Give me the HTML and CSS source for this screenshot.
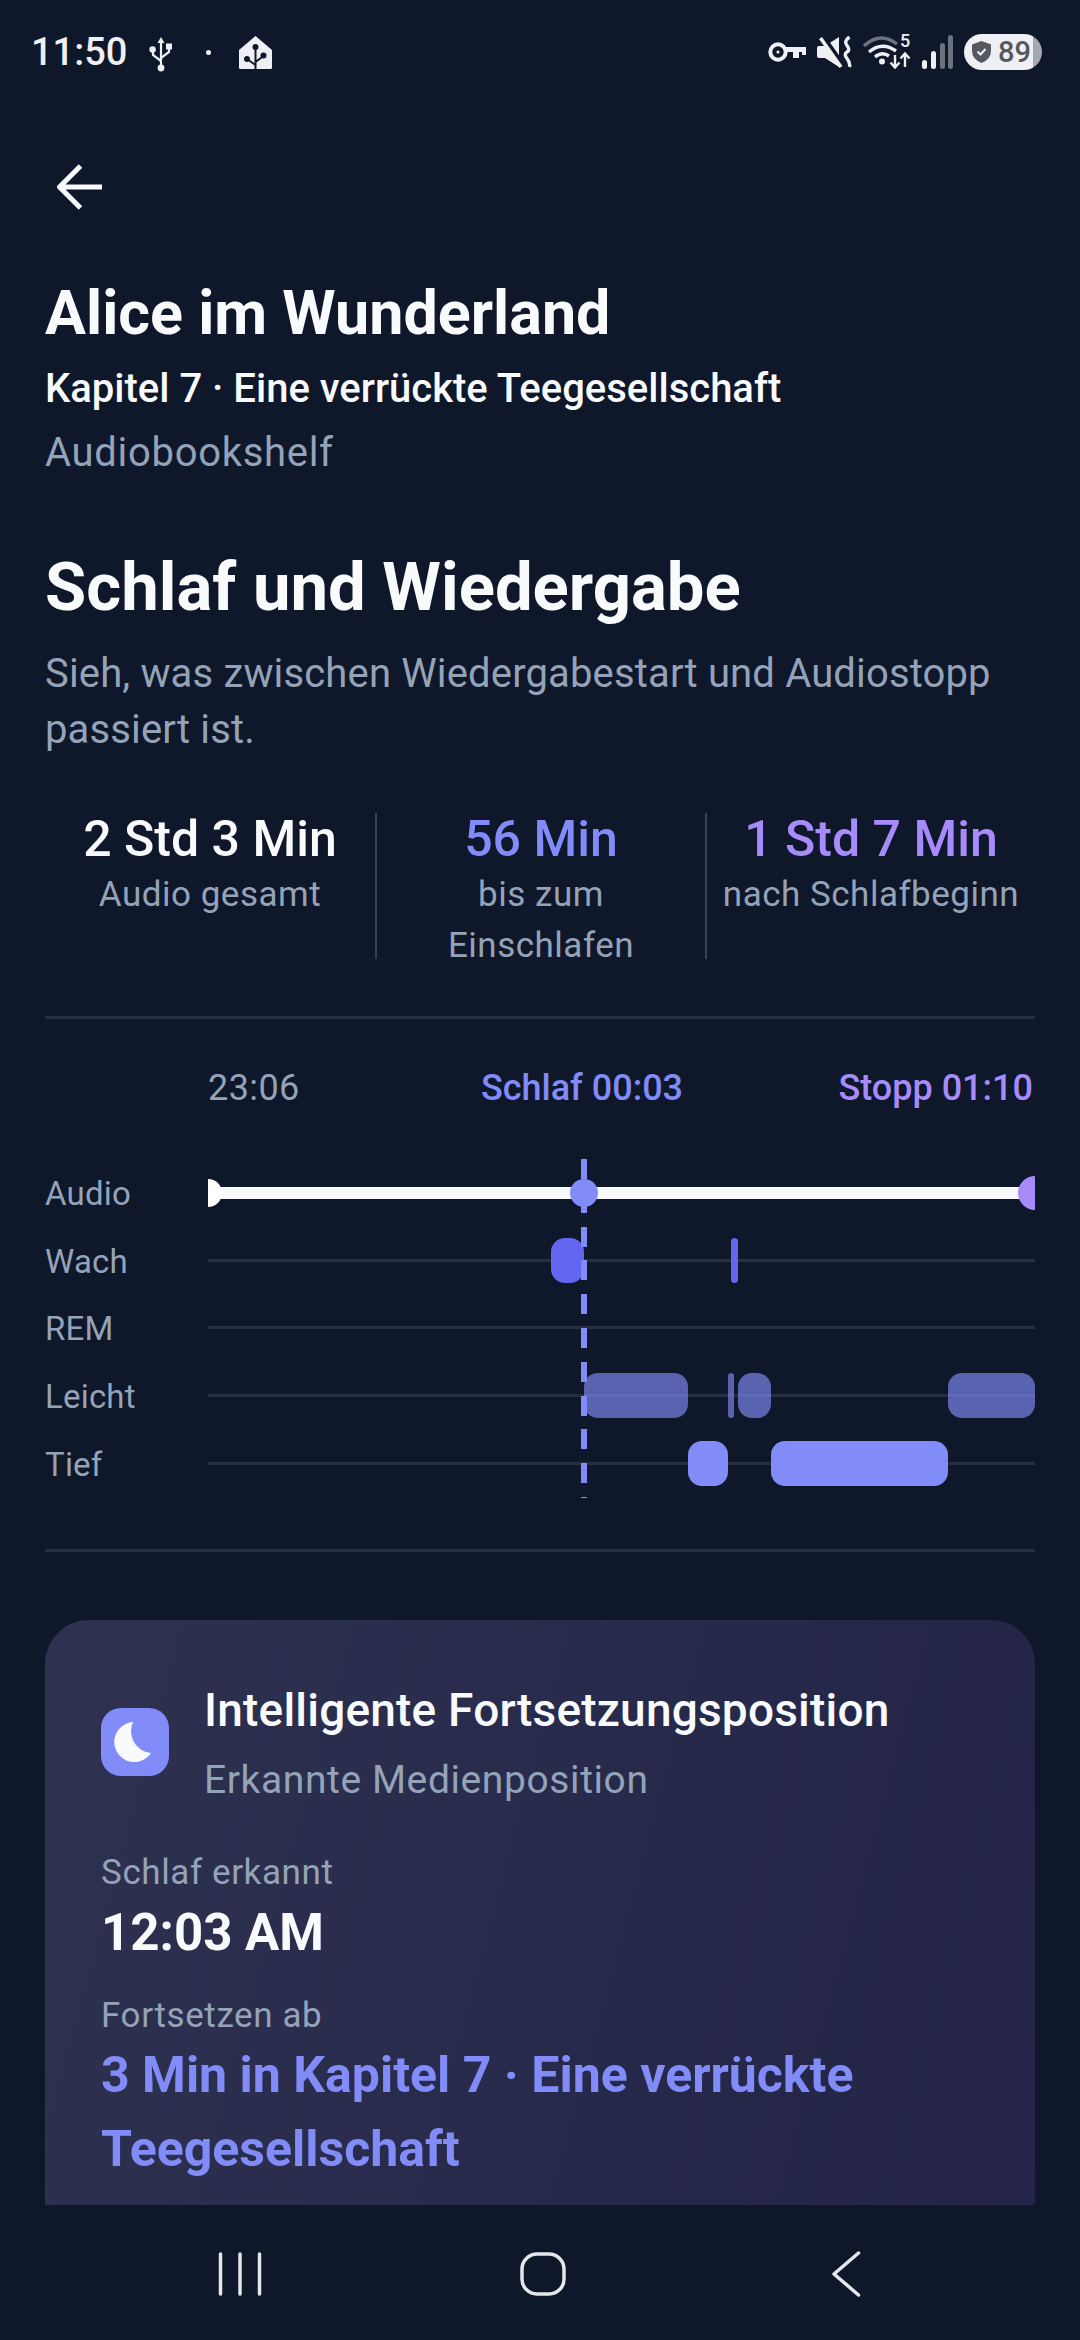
FILE: index.html
```html
<!DOCTYPE html>
<html lang="de">
<head>
    <meta charset="UTF-8">
    <meta name="viewport" content="width=device-width, initial-scale=1.0">
    <title>Schlaf und Wiedergabe</title>
    <link rel="stylesheet" href="styles.css">
</head>
<body>
    <div class="phone">
        <div class="status-bar">
            <div class="status-left">
                <span class="clock">11:50</span>
                <svg class="icon-usb" width="24" height="35" viewBox="0 0 24 35">
                    <path d="M12 30V3M12 24L4 18V14M12 21L20 15V11" fill="none" stroke="#eef0f3" stroke-width="2.2"/>
                    <path d="M12 0L15.5 6H8.5Z" fill="#eef0f3"/>
                    <circle cx="12" cy="31" r="3.4" fill="#eef0f3"/>
                    <circle cx="3.6" cy="12.5" r="3.2" fill="#eef0f3"/>
                    <rect x="17" y="6.5" width="6" height="6" fill="#eef0f3"/>
                </svg>
                <span class="status-dot"></span>
                <svg class="icon-home" width="33" height="33" viewBox="0 0 33 33">
                    <path d="M16.500 0L33 14V31.500Q33 33 31.500 33H1.500Q0 33 0 31.500V14Z" fill="#eef0f3"/>
                    <path d="M16.500 33V9M16.500 26L24.500 20M16.500 29L8 23" fill="none" stroke="#0f172a" stroke-width="2"/>
                    <circle cx="16.500" cy="11" r="3" fill="#0f172a"/>
                    <circle cx="24.500" cy="19.500" r="3" fill="#0f172a"/>
                    <circle cx="8" cy="23" r="3" fill="#0f172a"/>
                </svg>
            </div>
            <div class="status-right">
                <svg class="icon-key" width="38" height="20" viewBox="0 0 38 20">
                    <circle cx="10" cy="10" r="7.700" fill="none" stroke="#eef0f3" stroke-width="4"/>
                    <circle cx="10" cy="10" r="1.600" fill="#eef0f3"/>
                    <path d="M17 5H38V13H34V10H31V16H25V10H17Z" fill="#eef0f3"/>
                </svg>
                <svg class="icon-mute" width="35" height="32" viewBox="0 0 35 32">
                    <path d="M2 10H8L22 1V31L8 22H2Q0 22 0 20V12Q0 10 2 10Z" fill="#eef0f3"/>
                    <path d="M4 -1L28 33" stroke="#0f172a" stroke-width="6"/>
                    <path d="M3.500 2L24 31" stroke="#eef0f3" stroke-width="3.600"/>
                    <path d="M32.500 1Q26.500 5 30 9.500T30 16T30 22.500T32.500 31" fill="none" stroke="#eef0f3" stroke-width="3.400"/>
                </svg>
                <div class="wifi">
                    <svg width="48" height="34" viewBox="0 0 48 34">
                        <path d="M1 11Q17 -4 34 9" fill="none" stroke="#6b7280" stroke-width="3.400"/>
                        <path d="M6 17Q19 6 33 16" fill="none" stroke="#eef0f3" stroke-width="3.400"/>
                        <path d="M12 22Q19 16 26 21" fill="none" stroke="#eef0f3" stroke-width="3.400"/>
                        <circle cx="19" cy="26.500" r="3" fill="#eef0f3"/>
                        <path d="M32 20V32M27.500 27.500L32 32.500L36.500 27.500M42 32V19M37.500 23.500L42 18.500L46.500 23.500" fill="none" stroke="#eef0f3" stroke-width="2.400"/>
                    </svg>
                    <span class="wifi-num">5</span>
                </div>
                <svg class="icon-signal" width="31" height="34" viewBox="0 0 31 34">
                    <rect x="0" y="25" width="5" height="9" rx="2.500" fill="#eef0f3"/>
                    <rect x="9" y="16" width="5" height="18" rx="2.500" fill="#eef0f3"/>
                    <rect x="18" y="8" width="5" height="26" rx="2.500" fill="#6b7280"/>
                    <rect x="26" y="0" width="5" height="34" rx="2.500" fill="#6b7280"/>
                </svg>
                <div class="battery">
                    <svg width="19" height="22" viewBox="0 0 19 22">
                        <path d="M9.500 0L19 3.500V10Q19 18 9.500 22Q0 18 0 10V3.500Z" fill="#55585f"/>
                        <path d="M5.500 10.500L8.500 13.500L13.500 8" fill="none" stroke="#eef0f3" stroke-width="2"/>
                    </svg>
                    <span>89</span>
                </div>
            </div>
        </div>

        <div class="content">
            <div class="back">
                <svg width="46" height="46" viewBox="0 0 46 46">
                    <path d="M45 23H3M23.500 2L2.500 23L23.500 44" fill="none" stroke="#f8fafc" stroke-width="5"/>
                </svg>
            </div>

            <h1 class="book-title">Alice im Wunderland</h1>
            <div class="chapter">Kapitel 7 · Eine verrückte Teegesellschaft</div>
            <div class="source">Audiobookshelf</div>

            <h2 class="section-title">Schlaf und Wiedergabe</h2>
            <p class="section-text">Sieh, was zwischen Wiedergabestart und Audiostopp passiert ist.</p>

            <div class="stats">
                <div class="stat">
                    <div class="stat-value">2 Std 3 Min</div>
                    <div class="stat-label">Audio gesamt</div>
                </div>
                <div class="stat">
                    <div class="stat-value indigo">56 Min</div>
                    <div class="stat-label">bis zum Einschlafen</div>
                </div>
                <div class="stat">
                    <div class="stat-value purple">1 Std 7 Min</div>
                    <div class="stat-label">nach Schlafbeginn</div>
                </div>
            </div>

            <div class="timeline">
                <div class="times">
                    <span class="time-start">23:06</span>
                    <span class="time-sleep">Schlaf 00:03</span>
                    <span class="time-stop">Stopp 01:10</span>
                </div>
                <div class="chart">
                    <div class="row">
                        <span class="row-label">Audio</span>
                        <div class="track">
                            <div class="audio-line"></div>
                            <div class="cap cap-start"></div>
                            <div class="cap cap-stop"></div>
                        </div>
                    </div>
                    <div class="row">
                        <span class="row-label">Wach</span>
                        <div class="track">
                            <div class="grid-line"></div>
                            <div class="seg seg-wake" style="left: 41.44%; width: 4.03%"></div>
                            <div class="seg seg-wake seg-thin" style="left: 63.23%; width: 0.85%"></div>
                        </div>
                    </div>
                    <div class="row">
                        <span class="row-label">REM</span>
                        <div class="track">
                            <div class="grid-line"></div>
                        </div>
                    </div>
                    <div class="row">
                        <span class="row-label">Leicht</span>
                        <div class="track">
                            <div class="grid-line"></div>
                            <div class="seg seg-light" style="left: 45.47%; width: 12.54%"></div>
                            <div class="seg seg-light seg-thin" style="left: 62.88%; width: 0.69%"></div>
                            <div class="seg seg-light" style="left: 64.05%; width: 4.06%"></div>
                            <div class="seg seg-light seg-end" style="left: 89.48%; width: 10.52%"></div>
                        </div>
                    </div>
                    <div class="row">
                        <span class="row-label">Tief</span>
                        <div class="track">
                            <div class="grid-line"></div>
                            <div class="seg seg-deep" style="left: 58.01%; width: 4.87%"></div>
                            <div class="seg seg-deep" style="left: 68.12%; width: 21.36%"></div>
                        </div>
                    </div>
                    <div class="sleep-dash"></div>
                    <div class="sleep-dot"></div>
                </div>
            </div>

            <div class="card">
                <div class="card-head">
                    <div class="card-icon">
                        <svg width="68" height="68" viewBox="0 0 68 68">
                            <path d="M32 14A20 20 0 1 0 50 45A22 22 0 0 1 32 14Z" fill="#f8fafc"/>
                        </svg>
                    </div>
                    <div>
                        <div class="card-title">Intelligente Fortsetzungsposition</div>
                        <div class="card-sub">Erkannte Medienposition</div>
                    </div>
                </div>
                <div class="field-label first">Schlaf erkannt</div>
                <div class="field-value">12:03 AM</div>
                <div class="field-label second">Fortsetzen ab</div>
                <div class="resume">3 Min in Kapitel 7 · Eine verrückte Teegesellschaft</div>
            </div>
        </div>

        <div class="nav-bar">
            <div class="nav-item">
                <svg width="44" height="44" viewBox="0 0 44 44">
                    <path d="M2.500 2V42M22 2V42M41.500 2V42" fill="none" stroke="#e5e7eb" stroke-width="3.500" stroke-linecap="round"/>
                </svg>
            </div>
            <div class="nav-item">
                <svg width="46" height="44" viewBox="0 0 46 44">
                    <rect x="2" y="2" width="42" height="40" rx="15" fill="none" stroke="#e5e7eb" stroke-width="3.500"/>
                </svg>
            </div>
            <div class="nav-item">
                <svg width="30" height="46" viewBox="0 0 30 46">
                    <path d="M27.500 2L3 23L27.500 44" fill="none" stroke="#e5e7eb" stroke-width="3.500" stroke-linecap="round" stroke-linejoin="round"/>
                </svg>
            </div>
        </div>
    </div>
</body>
</html>
```

FILE: styles.css
```css
* {
    box-sizing: border-box;
}

body {
    margin: 0;
    background-color: #0f172a;
    font-family: Roboto, "Noto Sans", sans-serif;
    color: #f8fafc;
}

.phone {
    width: 1080px;
    height: 2340px;
    display: flex;
    flex-direction: column;
    overflow: hidden;
}

/* status bar */
.status-bar {
    height: 104px;
    flex-shrink: 0;
    padding: 0 38px 0 31px;
    display: flex;
    align-items: center;
    justify-content: space-between;
}

.status-left {
    display: flex;
    align-items: center;
}

.clock {
    font-size: 38px;
    font-weight: 500;
    color: #eef0f3;
    width: 118px;
}

.icon-usb {
    margin-top: 4px;
}

.status-dot {
    width: 5px;
    height: 5px;
    border-radius: 50%;
    background-color: #eef0f3;
    margin: 0 28px 0 33px;
}

.status-right {
    display: flex;
    align-items: center;
    gap: 11px;
}

.wifi {
    position: relative;
    height: 34px;
}

.wifi-num {
    position: absolute;
    left: 37px;
    top: -4px;
    font-size: 18px;
    line-height: 20px;
    font-weight: 500;
    color: #eef0f3;
}

.battery {
    width: 78px;
    height: 36px;
    border-radius: 18px;
    background: linear-gradient(to right, #eef0f3 88%, #a5a7b0 88%);
    display: flex;
    align-items: center;
    padding-left: 8px;
    gap: 7px;
    font-size: 29px;
    font-weight: 500;
    color: #55585f;
}

/* main column */
.content {
    flex: 1;
    min-height: 0;
    overflow: hidden;
    padding: 0 45px;
}

.back {
    margin-top: 60px;
    height: 62px;
    padding-left: 12px;
}

.book-title {
    margin: 49px 0 0;
    font-size: 61px;
    font-weight: 700;
    line-height: 76px;
}

.chapter {
    margin-top: 12px;
    font-size: 40px;
    font-weight: 500;
    line-height: 52px;
}

.source {
    margin-top: 11.500px;
    font-size: 40px;
    line-height: 52px;
    color: #94a3b8;
    letter-spacing: 0.7px;
}

.section-title {
    margin: 68.500px 0 0;
    font-size: 67px;
    font-weight: 700;
    line-height: 80px;
}

.section-text {
    margin: 19px 0 0;
    font-size: 40px;
    line-height: 56px;
    color: #94a3b8;
    letter-spacing: 0.15px;
}

/* stats */
.stats {
    margin-top: 55px;
    height: 146px;
    display: grid;
    grid-template-columns: 1fr 1fr 1fr;
    grid-template-rows: 146px;
    text-align: center;
}

.stat {
    padding: 1px 10px 0;
}

.stat + .stat {
    border-left: 2px solid rgba(255, 255, 255, 0.18);
}

.stat-value {
    font-size: 50px;
    font-weight: 500;
    line-height: 50px;
}

.stat-label {
    margin-top: 5px;
    font-size: 35px;
    line-height: 51px;
    color: #94a3b8;
    letter-spacing: 0.5px;
}

.indigo {
    color: #818cf8;
}

.purple {
    color: #a78bfa;
}

/* timeline */
.timeline {
    margin-top: 57px;
    border-top: 3px solid rgba(255, 255, 255, 0.1);
    border-bottom: 3px solid rgba(255, 255, 255, 0.1);
    padding: 47px 0 52px;
}

.times {
    position: relative;
    height: 44px;
    margin-left: 163px;
    font-size: 36px;
    line-height: 44px;
    font-weight: 500;
}

.time-start {
    color: #94a3b8;
    font-weight: 400;
    letter-spacing: 0.4px;
}

.time-sleep {
    position: absolute;
    left: 374px;
    transform: translateX(-50%);
    color: #818cf8;
}

.time-stop {
    position: absolute;
    right: 2px;
    color: #a78bfa;
}

.chart {
    position: relative;
    margin-top: 49px;
}

.row {
    height: 67.7px;
    display: flex;
    align-items: center;
}

.row-label {
    width: 163px;
    padding-top: 1px;
    font-size: 33px;
    color: #94a3b8;
    letter-spacing: 0.2px;
}

.track {
    position: relative;
    flex: 1;
    height: 100%;
    overflow: hidden;
}

.grid-line {
    position: absolute;
    left: 0;
    right: 0;
    top: 32px;
    height: 3px;
    background-color: rgba(255, 255, 255, 0.1);
}

.audio-line {
    position: absolute;
    left: 0;
    right: 0;
    top: 28px;
    height: 12px;
    background-color: #f8fafc;
}

.cap {
    position: absolute;
    border-radius: 50%;
}

.cap-start {
    left: -14px;
    top: 20px;
    width: 28px;
    height: 28px;
    background-color: #ffffff;
}

.cap-stop {
    right: -17px;
    top: 17px;
    width: 34px;
    height: 34px;
    background-color: #a78bfa;
}

.seg {
    position: absolute;
    top: 11px;
    height: 45px;
    border-radius: 14px;
}

.seg-thin {
    border-radius: 4px;
}

.seg-wake {
    background-color: #6366f1;
}

.seg-light {
    background-color: rgba(129, 140, 248, 0.65);
}

.seg-deep {
    background-color: #818cf8;
}

.sleep-dash {
    position: absolute;
    left: 536px;
    top: 0;
    bottom: -1px;
    width: 6px;
    background: repeating-linear-gradient(to bottom, #818cf8 0, #818cf8 20px, transparent 20px, transparent 33.8px);
}

.sleep-dot {
    position: absolute;
    left: 525px;
    top: 19.500px;
    width: 28px;
    height: 28px;
    border-radius: 50%;
    background-color: #818cf8;
}

/* resume card */
.card {
    margin-top: 68px;
    padding: 62px 56px 60px;
    border-radius: 44px;
    background: linear-gradient(105deg, #2e3250, #222346);
}

.card-head {
    display: flex;
    align-items: flex-start;
    gap: 35px;
}

.card-icon {
    width: 68px;
    height: 68px;
    flex-shrink: 0;
    margin-top: 26px;
    border-radius: 20px;
    background-color: #818cf8;
}

.card-title {
    font-size: 46px;
    font-weight: 500;
    line-height: 56px;
    letter-spacing: 0.2px;
}

.card-sub {
    margin-top: 17px;
    font-size: 39px;
    line-height: 50px;
    color: #94a3b8;
    letter-spacing: 0.6px;
}

.field-label {
    font-size: 35px;
    line-height: 44px;
    color: #94a3b8;
    letter-spacing: 0.6px;
}

.field-label.first {
    margin-top: 46px;
}

.field-label.second {
    margin-top: 31px;
}

.field-value {
    margin-top: 8px;
    font-size: 51px;
    font-weight: 700;
    line-height: 60px;
}

.resume {
    margin-top: 0;
    font-size: 50px;
    font-weight: 700;
    line-height: 74px;
    color: #818cf8;
}

/* system nav */
.nav-bar {
    height: 135px;
    flex-shrink: 0;
    padding: 3px 0 0 6px;
    display: flex;
    justify-content: center;
    align-items: center;
    background-color: #0f172a;
}

.nav-item {
    width: 303px;
    display: flex;
    justify-content: center;
}
```
